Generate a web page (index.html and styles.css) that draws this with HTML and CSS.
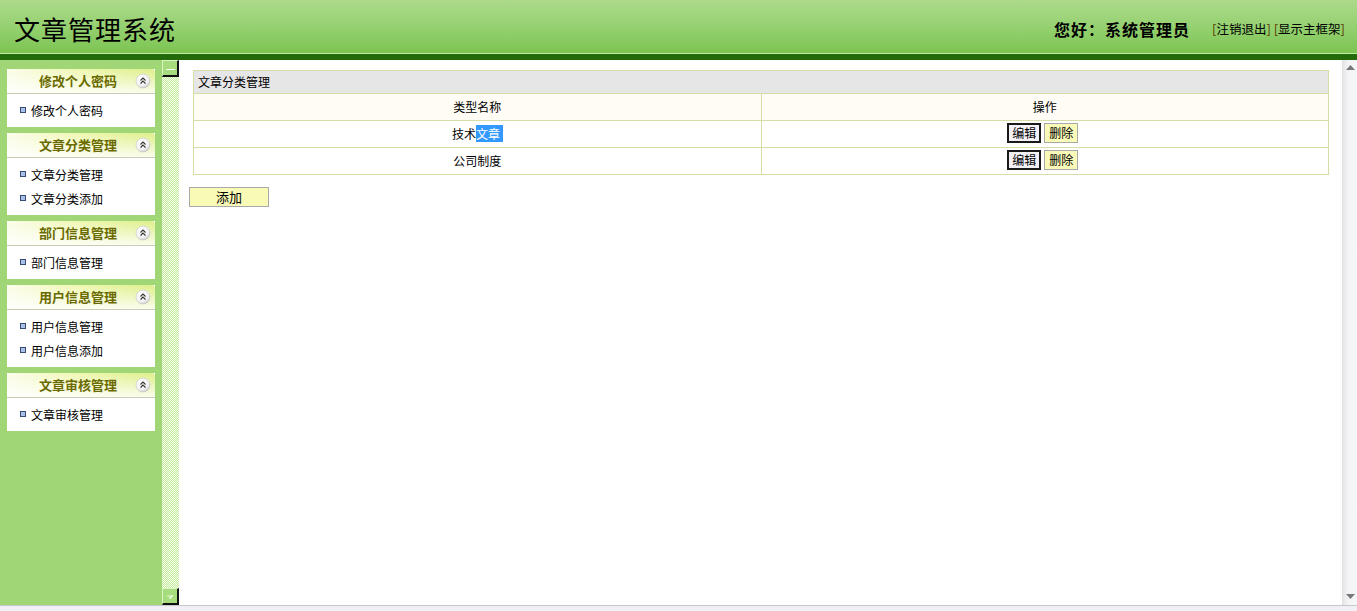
FILE: index.html
```html
<!DOCTYPE html>
<html lang="zh-CN">
<head>
<meta charset="utf-8">
<title>文章管理系统</title>
<link rel="stylesheet" href="styles.css">
</head>
<body>
<div class="page">
  <header class="top">
    <div class="top-inner">
      <h1 class="logo">文章管理系统</h1>
      <div class="userbox">
        <span class="hello">您好：系统管理员</span>
        <span class="links"><span class="br">[</span><a href="#">注销退出</a><span class="br">]</span> <span class="br">[</span><a href="#">显示主框架</a><span class="br">]</span></span>
      </div>
    </div>
    <div class="top-bar"></div>
  </header>

  <div class="frame">
    <aside class="sidebar">
      <section class="panel">
        <div class="panel-head"><span class="panel-title">修改个人密码</span><svg class="toggle" viewBox="0 0 16 16" width="16" height="16"><defs><radialGradient id="g1" cx="40%" cy="35%" r="70%"><stop offset="0" stop-color="#ffffff"/><stop offset="0.7" stop-color="#f2f2f2"/><stop offset="1" stop-color="#bdbdbd"/></radialGradient></defs><circle cx="8" cy="8" r="7" fill="url(#g1)" stroke="#c8c8c8" stroke-width="0.6"/><polyline points="5.5,7.5 8,5 10.5,7.5" fill="none" stroke="#333" stroke-width="1.1"/><polyline points="5.5,10.5 8,8 10.5,10.5" fill="none" stroke="#333" stroke-width="1.1"/></svg></div>
        <ul class="panel-body">
          <li><span class="dot"></span>修改个人密码</li>
        </ul>
      </section>
      <section class="panel">
        <div class="panel-head"><span class="panel-title">文章分类管理</span><svg class="toggle" viewBox="0 0 16 16" width="16" height="16"><circle cx="8" cy="8" r="7" fill="url(#g1)" stroke="#c8c8c8" stroke-width="0.6"/><polyline points="5.5,7.5 8,5 10.5,7.5" fill="none" stroke="#333" stroke-width="1.1"/><polyline points="5.5,10.5 8,8 10.5,10.5" fill="none" stroke="#333" stroke-width="1.1"/></svg></div>
        <ul class="panel-body">
          <li><span class="dot"></span>文章分类管理</li>
          <li><span class="dot"></span>文章分类添加</li>
        </ul>
      </section>
      <section class="panel">
        <div class="panel-head"><span class="panel-title">部门信息管理</span><svg class="toggle" viewBox="0 0 16 16" width="16" height="16"><circle cx="8" cy="8" r="7" fill="url(#g1)" stroke="#c8c8c8" stroke-width="0.6"/><polyline points="5.5,7.5 8,5 10.5,7.5" fill="none" stroke="#333" stroke-width="1.1"/><polyline points="5.5,10.5 8,8 10.5,10.5" fill="none" stroke="#333" stroke-width="1.1"/></svg></div>
        <ul class="panel-body">
          <li><span class="dot"></span>部门信息管理</li>
        </ul>
      </section>
      <section class="panel">
        <div class="panel-head"><span class="panel-title">用户信息管理</span><svg class="toggle" viewBox="0 0 16 16" width="16" height="16"><circle cx="8" cy="8" r="7" fill="url(#g1)" stroke="#c8c8c8" stroke-width="0.6"/><polyline points="5.5,7.5 8,5 10.5,7.5" fill="none" stroke="#333" stroke-width="1.1"/><polyline points="5.5,10.5 8,8 10.5,10.5" fill="none" stroke="#333" stroke-width="1.1"/></svg></div>
        <ul class="panel-body">
          <li><span class="dot"></span>用户信息管理</li>
          <li><span class="dot"></span>用户信息添加</li>
        </ul>
      </section>
      <section class="panel">
        <div class="panel-head"><span class="panel-title">文章审核管理</span><svg class="toggle" viewBox="0 0 16 16" width="16" height="16"><circle cx="8" cy="8" r="7" fill="url(#g1)" stroke="#c8c8c8" stroke-width="0.6"/><polyline points="5.5,7.5 8,5 10.5,7.5" fill="none" stroke="#333" stroke-width="1.1"/><polyline points="5.5,10.5 8,8 10.5,10.5" fill="none" stroke="#333" stroke-width="1.1"/></svg></div>
        <ul class="panel-body">
          <li><span class="dot"></span>文章审核管理</li>
        </ul>
      </section>
    </aside>

    <div class="splitter">
      <div class="split-btn"><span class="dash"></span></div>
      <div class="split-btn"><svg viewBox="0 0 14 14" width="14" height="14"><path d="M6 9 L9 6 L10 7 L7 10 Z" fill="#fff"/><path d="M3 6 L11 6 L7 9 Z" fill="#d8f2c0" opacity="0.7"/></svg></div>
    </div>

    <main class="main">
      <table class="grid">
        <tr class="grid-title"><td colspan="2">文章分类管理</td></tr>
        <tr class="grid-head"><td>类型名称</td><td>操作</td></tr>
        <tr><td>技术<span class="sel">文章&nbsp;</span></td><td><button class="btn-edit">编辑</button><button class="btn-yellow">删除</button></td></tr>
        <tr><td>公司制度</td><td><button class="btn-edit">编辑</button><button class="btn-yellow">删除</button></td></tr>
      </table>
      <div class="actions"><button class="btn-yellow btn-add">添加</button></div>
    </main>

    <div class="scrollbar">
      <svg class="arrow" viewBox="0 0 9 5" width="9" height="5"><path d="M0 5 L4.5 0 L9 5 Z" fill="#777"/></svg>
      <svg class="arrow" viewBox="0 0 9 5" width="9" height="5"><path d="M0 0 L9 0 L4.5 5 Z" fill="#777"/></svg>
    </div>
  </div>

  <footer class="status"></footer>
</div>
</body>
</html>
```

FILE: styles.css
```css
* { box-sizing: border-box; }
html, body { margin: 0; padding: 0; }
body {
  font-family: "Noto Sans CJK SC", "Liberation Sans", sans-serif;
  font-size: 12px;
  color: #000;
  background: #fff;
  overflow: hidden;
}
.page {
  width: 1357px;
  height: 611px;
  display: flex;
  flex-direction: column;
}

/* header */
.top { flex: 0 0 60px; display: flex; flex-direction: column; }
.top-inner {
  height: 54px;
  background: linear-gradient(to bottom, #acda8a 0%, #98d274 45%, #7cc452 100%);
  border-bottom: 1px solid #c2eaa0;
  display: flex;
  align-items: center;
  justify-content: space-between;
  padding: 0 12px 0 14px;
}
.top-bar { height: 6px; background: #236a0b; }
.logo {
  margin: 0;
  font-size: 26px;
  font-weight: normal;
  letter-spacing: 1px;
  line-height: 30px;
  color: #000;
  padding-top: 4px;
}
.userbox { display: flex; align-items: center; gap: 22px; padding-top: 4px; }
.hello { font-size: 16px; font-weight: bold; letter-spacing: 1px; }
.links { font-size: 12.5px; }
.links a { color: #000; text-decoration: none; }
.links .br { color: #5a3a00; font-size: 13px; }

/* frame */
.frame { flex: 1 1 auto; display: flex; min-height: 0; }

.sidebar {
  width: 162px;
  flex: 0 0 162px;
  background: #a0d676;
  padding: 9px 7px 0 7px;
  display: flex;
  flex-direction: column;
  gap: 6px;
}
.panel { background: #fff; }
.panel-head {
  height: 25px;
  border-radius: 4px 4px 0 0;
  background:
    linear-gradient(to bottom, rgba(255,255,255,0) 0%, rgba(255,255,255,0.85) 100%),
    linear-gradient(to right, #fbfde8 0%, #f0f8b4 45%, #dcef88 100%);
  border-bottom: 1px solid #c9cdb8;
  display: flex;
  align-items: center;
  position: relative;
  padding-bottom: 2px;
}
.panel-title {
  flex: 1;
  text-align: center;
  font-size: 13px;
  font-weight: bold;
  color: #6a6a00;
  padding-right: 6px;
}
.toggle { position: absolute; right: 4px; top: 4px; }
.panel-body {
  list-style: none;
  margin: 0;
  padding: 4px 0 5px 0;
}
.panel-body li {
  height: 24px;
  display: flex;
  align-items: center;
  font-size: 12px;
  padding-left: 13px;
}
.dot {
  width: 6px;
  height: 6px;
  border: 1px solid #3c4a78;
  background: #a9c0ea;
  margin-right: 5px;
}

/* splitter */
.splitter {
  width: 17px;
  flex: 0 0 17px;
  background-color: #e4f6d0;
  background-image: repeating-conic-gradient(#c6ea9e 0% 25%, #f4fdea 0% 50%);
  background-size: 2px 2px;
  display: flex;
  flex-direction: column;
  justify-content: space-between;
}
.split-btn {
  height: 17px;
  width: 17px;
  background: #a6dc7e;
  border-right: 2px solid #111;
  border-bottom: 2px solid #111;
  border-top: 1px solid #dcf5c6;
  border-left: 1px solid #dcf5c6;
  display: flex;
  align-items: center;
  justify-content: center;
}
.dash { width: 9px; height: 1px; background: #f6fcef; margin-top: 3px; }

/* main */
.main {
  flex: 1 1 auto;
  background: #fff;
  padding: 10px 13px 0 10px;
  min-width: 0;
}
.grid {
  width: calc(100% - 4px);
  margin-left: 4px;
  border-collapse: collapse;
  border: 1px solid #d5dea6;
  font-size: 12px;
}
.grid td {
  border: 1px solid #d5dea6;
  text-align: center;
  height: 27px;
  padding: 0 0 2px 0;
  width: 50%;
}
.grid-title td {
  background: #e6e6e6;
  text-align: left;
  height: 23px;
  padding: 0 0 1px 4px;
}
.grid-head td { background: #fffcf5; }
.sel { background: #3399ff; color: #fff; }
button {
  font-family: "Noto Sans CJK SC", "Liberation Sans", sans-serif;
  font-size: 12px;
  padding: 0;
  margin: 0;
  color: #000;
  vertical-align: middle;
}
.btn-edit {
  width: 34px;
  height: 20px;
  background: #f3f0f6;
  border: 2px solid #1a1a1a;
  line-height: 14px;
  margin-left: -4px;
}
.btn-yellow {
  width: 34px;
  height: 20px;
  background: #fafab8;
  border: 1px solid #a9a9a9;
  line-height: 16px;
  margin-left: 3px;
}
.actions { padding-top: 11px; }
.btn-add {
  margin-left: 0;
  width: 80px;
  height: 20px;
  font-size: 13px;
  background: #f8fab6;
}

/* scrollbar */
.scrollbar {
  width: 15px;
  flex: 0 0 15px;
  background: linear-gradient(to right, #e6e6e8 0%, #f4f3f5 40%, #f6f5f7 100%);
  border-left: 1px solid #e2e2e4;
  display: flex;
  flex-direction: column;
  justify-content: space-between;
  align-items: center;
  padding: 5px 0 6px 0;
}

.status {
  flex: 0 0 6px;
  background: #eef0f6;
  border-top: 1px solid #c6c8cc;
}
```
